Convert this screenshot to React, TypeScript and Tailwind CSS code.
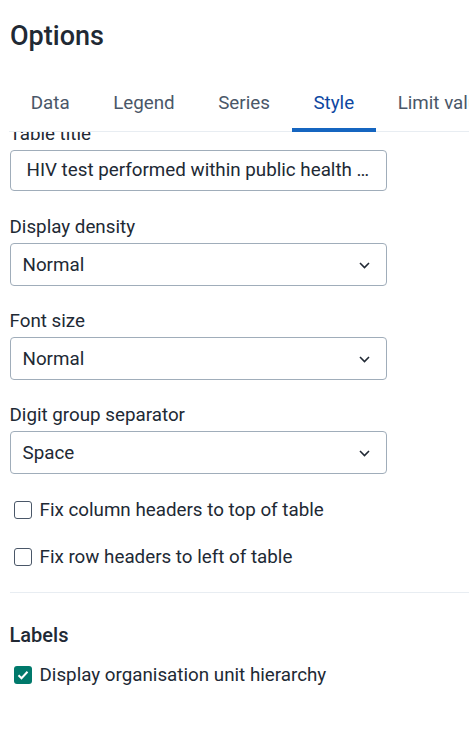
import React from "react";

const tabs = ["Data", "Legend", "Series", "Style", "Limit values"];

function Chevron() {
  return (
    <svg width="11" height="7" viewBox="0 0 11 7" fill="none" className="shrink-0">
      <path d="M1 1l4.5 4.5L10 1" stroke="#212934" strokeWidth="1.6" />
    </svg>
  );
}

function Field({ label, children }: { label: string; children: React.ReactNode }) {
  return (
    <div className="flex flex-col">
      <label className="text-[18.8px] leading-[24px] text-[#212934] mb-[4px]">{label}</label>
      {children}
    </div>
  );
}

function Select({ value }: { value: string }) {
  return (
    <div className="w-[377px] h-[43px] border border-[#a0adba] rounded-[4px] flex items-center justify-between pl-[12px] pr-[16px] pt-[2px] text-[18.8px] text-[#212934]">
      <span>{value}</span>
      <Chevron />
    </div>
  );
}

function Checkbox({ label, checked = false }: { label: string; checked?: boolean }) {
  return (
    <div className="flex items-center leading-[24px] text-[18.8px] text-[#212934]">
      <span
        className={
          checked
            ? "ml-[4px] w-[18px] h-[18px] rounded-[3px] bg-[#00796b] flex items-center justify-center"
            : "ml-[4px] w-[18px] h-[18px] rounded-[3px] border-[1.5px] border-[#4a5768] bg-white"
        }
      >
        {checked && (
          <svg width="12" height="10" viewBox="0 0 12 10" fill="none">
            <path d="M1.5 5.2l3 3L10.5 1.8" stroke="white" strokeWidth="2" />
          </svg>
        )}
      </span>
      <span className="ml-[8px]">{label}</span>
    </div>
  );
}

export default function App() {
  return (
    <div className="w-[469px] h-[756px] bg-white overflow-hidden font-['Roboto',sans-serif]">
      <h1 className="pt-[20px] pl-[10px] text-[27px] leading-[32px] font-medium text-[#212934]">Options</h1>

      <div className="mt-[22px] ml-[9px] flex border-b border-[#e8edf2] whitespace-nowrap">
        {tabs.map((t) => (
          <div
            key={t}
            className={
              t === "Style"
                ? "relative px-[21.75px] pt-[17px] pb-[16px] leading-[24px] text-[18.8px] text-[#0d47a1]"
                : "relative px-[21.75px] pt-[17px] pb-[16px] leading-[24px] text-[18.8px] text-[#4a5768]"
            }
          >
            {t}
            {t === "Style" && <span className="absolute left-0 right-0 -bottom-px h-[4px] bg-[#1565c0]" />}
          </div>
        ))}
      </div>

      <div className="overflow-hidden h-[624px]">
        <div className="-mt-[10px] pl-[9.5px] flex flex-col">
          <Field label="Table title">
            <div className="w-[377px] h-[41px] border border-[#a0adba] rounded-[4px] flex items-center pl-[16px] text-[18.8px] text-[#212934] whitespace-nowrap overflow-hidden">
              HIV test performed within public health …
            </div>
          </Field>
          <div className="mt-[24px]">
            <Field label="Display density">
              <Select value="Normal" />
            </Field>
          </div>
          <div className="mt-[23px]">
            <Field label="Font size">
              <Select value="Normal" />
            </Field>
          </div>
          <div className="mt-[23px]">
            <Field label="Digit group separator">
              <Select value="Space" />
            </Field>
          </div>
          <div className="mt-[24px]">
            <Checkbox label="Fix column headers to top of table" />
          </div>
          <div className="mt-[23px]">
            <Checkbox label="Fix row headers to left of table" />
          </div>
          <div className="mt-[23px] h-px bg-[#e8edf2]" />
          <h2 className="mt-[30px] text-[20px] leading-[24px] font-medium text-[#212934]">Labels</h2>
          <div className="mt-[16px]">
            <Checkbox label="Display organisation unit hierarchy" checked />
          </div>
        </div>
      </div>
    </div>
  );
}
